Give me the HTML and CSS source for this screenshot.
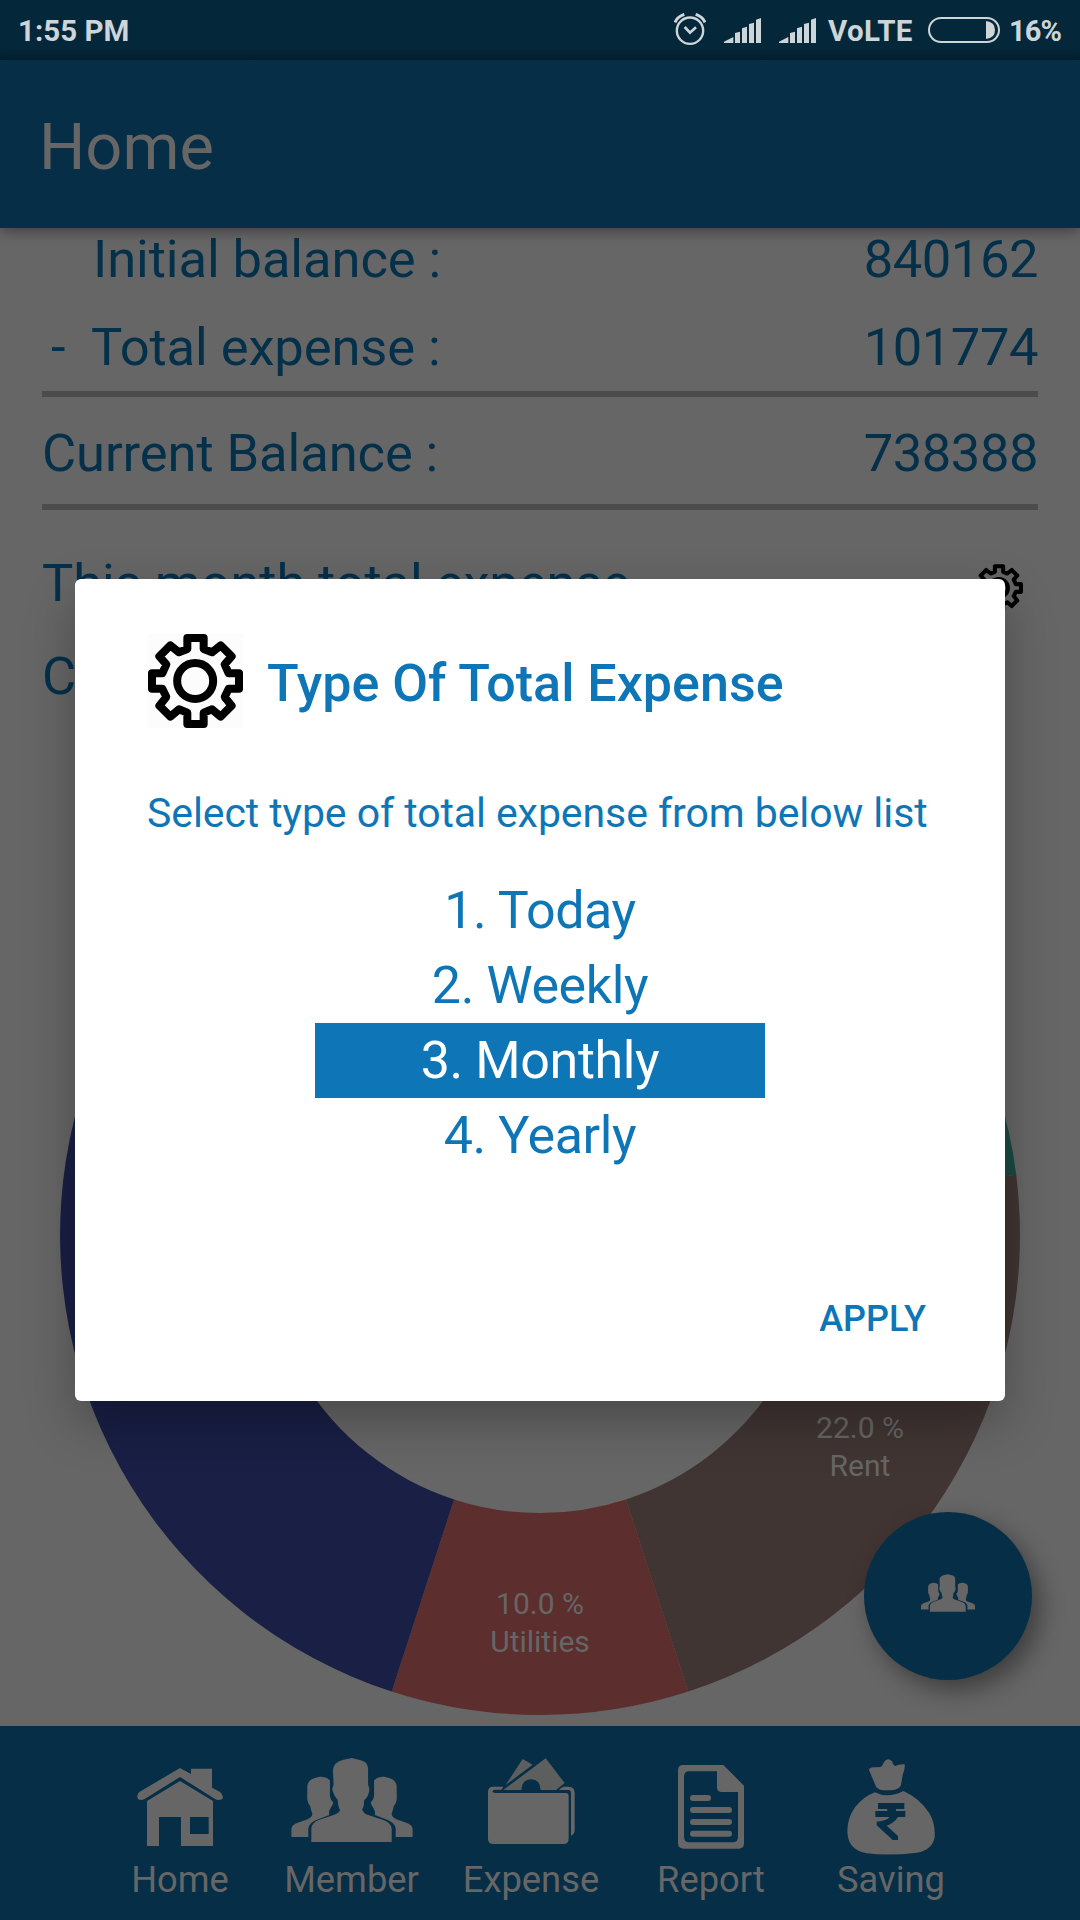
FILE: index.html
```html
<!DOCTYPE html>
<html lang="en">
<head>
<meta charset="utf-8">
<title>Home</title>
<link rel="stylesheet" href="styles.css">
</head>
<body>
<svg width="0" height="0" class="defs">
  <symbol id="people" viewBox="543 113 365 253">
    <path d="M603 366V325Q605 308 625 300L672 284Q686 278 690 270Q684 264 682 238Q674 232 668 215Q664 204 670 195L668 150Q670 125 700 118L725 113L752 120Q775 125 774 150V195Q780 204 776 218Q772 234 762 240Q762 260 756 268Q760 280 772 284L820 300Q842 308 845 325V366Z"/>
    <path id="side" d="M543 351V325Q546 314 560 309L590 298Q606 292 606 281Q600 262 600 258Q588 245 591 220V195Q595 175 625 170Q645 168 659 180V220Q658 236 669 246Q668 256 662 262L656 275L657 285L620 299Q596 308 594 325V351Z"/>
    <use href="#side" transform="translate(1451 0) scale(-1 1)"/>
  </symbol>
  <symbol id="gear" viewBox="84 72 285 282">
    <g fill="none" stroke="#000" stroke-width="24" stroke-linejoin="round">
      <path d="M202 84H251V117L276 127L302 106L335 139L314 163L326 190H357V236H326L314 261L335 287L302 320L276 298L251 308V342H202V308L177 298L151 320L118 287L139 261L127 236H96V190H127L139 163L118 139L151 106L177 127L202 117Z"/>
      <circle cx="225.500" cy="213" r="54"/>
    </g>
  </symbol>
  <symbol id="signal" viewBox="252 54 111 75">
    <path d="M252 129V125L280 111V129ZM285 99L300 95V129H285ZM306 85L321 80V129H306ZM327 72L342 68V129H327ZM348 59L363 54V129H348Z"/>
  </symbol>
</svg>

<div class="screen">
  <div class="status">
    <span class="time">1:55 PM</span>
    <svg class="alarm" viewBox="102 39 96 96" fill="none" stroke="#cdd5d9" stroke-width="7"><circle cx="150" cy="92" r="39.500"/><path d="M134 81L150 98L168 82" stroke-width="8"/><path d="M105 67Q112 50 133 43M167 43Q188 50 195 67" stroke-width="9"/></svg>
    <svg class="signal"><use href="#signal"/></svg>
    <svg class="signal"><use href="#signal"/></svg>
    <span class="volte">VoLTE</span>
    <svg class="battery" viewBox="0 0 72 26"><rect x="1" y="1" width="70" height="24" rx="12" fill="none" stroke="#cdd5d9" stroke-width="2"/><path d="M58 4Q67 5 67 13T58 22Z" fill="#cdd5d9"/></svg>
    <span class="percent">16%</span>
  </div>
  <header class="appbar">Home</header>

  <main class="content">
    <div class="row indent"><span>Initial balance :</span><span class="amount">840162</span></div>
    <div class="row minus"><span><i>-</i>Total expense :</span><span class="amount">101774</span></div>
    <hr class="rule">
    <div class="row current"><span>Current Balance :</span><span class="amount">738388</span></div>
    <hr class="rule second">
    <div class="row month"><span>This month total expense</span><svg class="gear-small"><use href="#gear"/></svg></div>
    <div class="row category"><span>C</span></div>
    <svg class="donut" viewBox="-480 -480 960 960">
      <path fill="#1c4942" d="M0-480A480 480 0 0 1 476.200-60.200L275.800-34.800A278 278 0 0 0 0-278Z"/>
      <path fill="#403533" d="M476.200-60.200A480 480 0 0 1 148.300 456.500L85.900 264.400A278 278 0 0 0 275.800-34.800Z"/>
      <path fill="#5c2e2e" d="M148.300 456.500A480 480 0 0 1-148.300 456.500L-85.900 264.400A278 278 0 0 0 85.900 264.400Z"/>
      <path fill="#191f45" d="M-148.300 456.500A480 480 0 0 1 0-480V-278A278 278 0 0 0-85.900 264.400Z"/>
      <g class="slice-label">
        <text x="0" y="379">10.0 %</text><text x="0" y="417">Utilities</text>
        <text x="320" y="203">22.0 %</text><text x="320" y="241">Rent</text>
      </g>
    </svg>
  </main>

  <nav class="tabs">
    <div class="tab"><div class="icon"><svg width="86" height="78" viewBox="81 144 258 234"><path d="M210 144L243 162V146H306V203L330 216Q342 226 337 237Q326 243 315 237L210 171L104 237Q92 243 84 237Q78 226 88 216Z"/><path fill-rule="evenodd" d="M210 183L309 243V378H213V291H147V378H111V243ZM240 291V342H296V291Z"/></svg></div>Home</div>
    <div class="tab"><div class="icon member"><svg width="122" height="84"><use href="#people"/></svg></div>Member</div>
    <div class="tab"><div class="icon expense"><svg width="87" height="86" viewBox="144 113 261 258"><path d="M144 215Q144 199 160 199H190L184 208H162Q156 210 158 215L164 218H378Q386 218 386 226V355Q386 371 370 371H160Q144 371 144 355Z"/><path d="M360 206L370 199H385Q404 199 404 218V330Q404 342 393 346V218Q393 209 385 209H357Z"/><path fill="#5d5f5f" d="M190 209L317 114L374 188L348 209H302Q300 177 273 177Q246 177 244 209ZM197 194L248 116L278 133Z"/></svg></div>Expense</div>
    <div class="tab"><div class="icon report"><svg width="66" height="84" viewBox="714 135 198 252"><path fill-rule="evenodd" d="M732 135H850L912 197V370Q912 386 896 386H732Q714 386 714 370V151Q714 135 730 135ZM748 154Q732 154 732 170V352Q732 367 748 367H878Q894 367 894 352V216H845Q833 216 831 204V154Z"/><path d="M759 234H804M759 270H867M759 306H867M759 341.500H867" stroke="#666" stroke-width="18" stroke-linecap="round"/></svg></div>Report</div>
    <div class="tab"><div class="icon saving"><svg width="88" height="96" viewBox="261 117 264 288"><path d="M349 202L327 150Q328 141 345 142L362 141Q368 138 372 126Q383 110 396 124Q400 137 406 138Q418 132 434 133Q436 145 428 165L423 195Q420 205 405 209Q380 212 360 209Z"/><path d="M345 217Q383 237 430 213Q480 235 508 280Q526 310 524 350Q518 390 470 398Q390 408 320 400Q268 390 263 345Q258 300 285 262Q310 230 345 217Z"/><path fill="#062f47" d="M354 249H433V267H408V273H436V291H414Q402 310 380 317L414 348V360H398L350 316V305Q382 302 388 291H346V273H382V267H354Z"/></svg></div>Saving</div>
  </nav>

  <div class="fab"><svg width="54" height="38"><use href="#people"/></svg></div>

  <section class="dialog">
    <div class="dialog-head"><svg class="gear"><use href="#gear"/></svg><h2>Type Of Total Expense</h2></div>
    <p>Select type of total expense from below list</p>
    <ul class="options">
      <li>1. Today</li>
      <li>2. Weekly</li>
      <li class="selected">3. Monthly</li>
      <li>4. Yearly</li>
    </ul>
    <div class="actions">APPLY</div>
  </section>
</div>
</body>
</html>
```
FILE: styles.css
```css
* { box-sizing: border-box; margin: 0; padding: 0; }
body { font-family: Roboto, sans-serif; background: #666; }
svg { display: block; flex: none; }
.defs { position: absolute; }
.screen {
  position: relative;
  width: 1080px;
  height: 1920px;
  overflow: hidden;
  display: flex;
  flex-direction: column;
  background: #666;
}

.status {
  height: 60px;
  flex: none;
  display: flex;
  align-items: center;
  padding: 0 18px;
  background: linear-gradient(#04283a 48px, #03202f);
  color: #cdd5d9;
  font-size: 29.5px;
  font-weight: 700;
  line-height: 60px;
  white-space: nowrap;
}
.time, .volte, .percent { padding-top: 2px; }
.time { width: 656px; }
.alarm { width: 32px; height: 32px; margin-top: -2px; }
.signal { width: 37px; height: 25px; margin-left: 18px; fill: #cdd5d9; }
.volte { width: 112px; padding-left: 12px; letter-spacing: .4px; }
.battery { width: 72px; height: 26px; }
.percent { margin-left: 9px; font-size: 29px; letter-spacing: -.9px; }

.appbar {
  position: relative;
  height: 168px;
  flex: none;
  padding-left: 39px;
  background: #062f47;
  color: #666;
  font-size: 65px;
  line-height: 174px;
  box-shadow: 0 4px 12px rgba(0, 0, 0, .35);
}

.content { flex: 1; min-height: 0; padding: 1px 42px 0; color: #04304a; }
.row {
  display: flex;
  justify-content: space-between;
  height: 60px;
  font-size: 52.5px;
  line-height: 60px;
  letter-spacing: -.1px;
}
.amount { letter-spacing: -.45px; }
.indent { padding-left: 51px; }
.minus { margin-top: 28px; padding-left: 9px; }
.minus i { display: inline-block; width: 40px; font-style: normal; }
.rule { height: 6px; margin-top: 14px; border: 0; background: #4c4c4c; }
.current { margin-top: 26px; }
.second { margin-top: 21px; }
.month { margin-top: 43px; padding-right: 15px; }
.gear-small { width: 48px; height: 48px; margin-top: 11px; }
.category { margin-top: 33px; }
.donut { width: 960px; height: 960px; margin: 49px 0 0 18px; }
.slice-label { fill: #666; font-size: 30px; text-anchor: middle; }

.tabs {
  height: 194px;
  flex: none;
  position: relative;
  display: grid;
  grid-template-columns: 172px 171px 188px 172px 188px;
  padding-left: 94px;
  background: #062f47;
  color: #666;
  fill: #666;
  font-size: 36.3px;
  line-height: 44px;
  text-align: center;
}
.icon { height: 132px; padding-top: 42px; display: flex; justify-content: center; align-items: flex-start; }
.member, .expense { padding-top: 32px; }
.report { padding-top: 39px; }
.saving { padding-top: 33px; }

.fab {
  position: absolute;
  left: 864px;
  top: 1512px;
  width: 168px;
  height: 168px;
  border-radius: 50%;
  display: flex;
  align-items: center;
  justify-content: center;
  background: #062f47;
  fill: #666;
  box-shadow: 8px 10px 24px rgba(0, 0, 0, .4);
}
.fab svg { margin-top: -6px; }

.dialog {
  position: absolute;
  left: 75px;
  top: 579px;
  width: 930px;
  height: 822px;
  padding: 54px 73px;
  border-radius: 6px;
  background: #fff;
  color: #0e76b6;
  box-shadow: 0 20px 50px rgba(0, 0, 0, .28);
}
.dialog-head { display: flex; align-items: center; height: 95px; }
.gear { width: 95px; height: 94px; background: #fcfcfc; }
.dialog h2 { margin-left: 24px; padding-top: 6px; font-size: 52px; font-weight: 500; line-height: 60px; white-space: nowrap; }
.dialog p { margin: 60px 0 0 -1px; font-size: 41px; line-height: 50px; letter-spacing: -.08px; white-space: nowrap; }
.options { width: 450px; margin: 35px auto 0; list-style: none; text-align: center; font-size: 52px; line-height: 75px; letter-spacing: -.4px; }
.selected { background: #0e76b6; color: #fff; }
.actions { margin-top: 121px; padding-right: 6px; text-align: right; font-size: 36px; font-weight: 500; line-height: 50px; }
```
